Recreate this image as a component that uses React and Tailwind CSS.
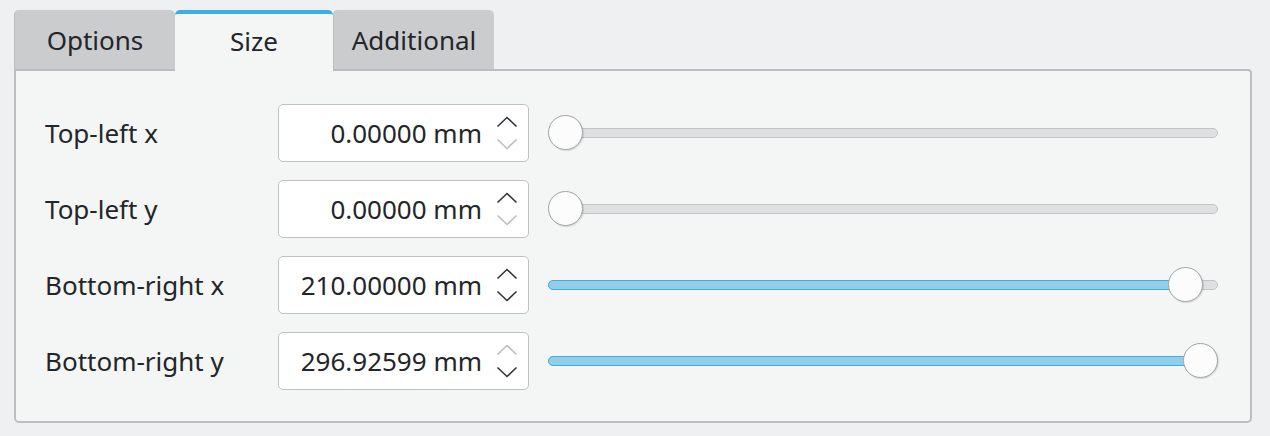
// Page-size dialog section: tab bar + "Size" tab with four spinbox/slider rows.
import { useState } from 'react'

const ROWS = [
  { label: 'Top-left x',     value: '0.00000 mm',   pos: 0,      upOn: true,  downOn: false },
  { label: 'Top-left y',     value: '0.00000 mm',   pos: 0,      upOn: true,  downOn: false },
  { label: 'Bottom-right x', value: '210.00000 mm', pos: 0.9756, upOn: true,  downOn: true  },
  { label: 'Bottom-right y', value: '296.92599 mm', pos: 1,      upOn: false, downOn: true  },
]

const TABS = ['Options', 'Size', 'Additional']

function Chevron({ up, enabled }) {
  return (
    <svg width="22" height="12" viewBox="0 0 22 12" fill="none"
         className={enabled ? 'text-[#31363b]' : 'text-[#bdbebf]'}>
      <path d={up ? 'M1.5 10.5 L11 1.5 L20.5 10.5' : 'M1.5 1.5 L11 10.5 L20.5 1.5'}
            stroke="currentColor" strokeWidth="1.6" />
    </svg>
  )
}

function SpinBox({ value, upOn, downOn }) {
  return (
    <div className="w-[251px] h-[58px] flex items-center bg-white border border-[#bfc0c1]
                    rounded-[5px] pr-[10px]">
      <span className="flex-1 text-right text-[26px] text-[#232629] pr-[14px]">{value}</span>
      <div className="flex flex-col gap-[10px]">
        <Chevron up enabled={upOn} />
        <Chevron enabled={downOn} />
      </div>
    </div>
  )
}

function Slider({ pos }) {
  // handle travels between the two ends of the track (handle is 35px wide)
  const left = `calc(${pos * 100}% - ${pos * 35}px)`
  const fill = `calc(${pos * 100}% - ${pos * 35}px + 17px)`
  return (
    <div className="relative flex-1 h-[36px] flex items-center">
      <div className="w-full h-[10px] rounded-full bg-[#dfe0e1] border border-[#c3c4c5]" />
      {pos > 0 && (
        <div className="absolute left-0 h-[10px] rounded-full bg-[#93cee9] border border-[#3daee9]"
             style={{ width: fill }} />
      )}
      <div className="absolute top-0 w-[35px] h-[35px] rounded-full bg-[#fcfcfc]
                      border-[1.5px] border-[#a2a3a4] shadow-[1px_1px_1px_rgba(0,0,0,0.12)]"
           style={{ left }} />
    </div>
  )
}

export default function App() {
  const [tab, setTab] = useState('Size')

  return (
    <div className="w-[1270px] h-[436px] bg-[#eff0f1] pt-[10px] pl-[14px] pr-[18px]
                    text-[#232629] font-['Noto_Sans',sans-serif]">

      {/* Tab bar */}
      <div className="flex h-[61px] relative z-10">
        {TABS.map(t => {
          const active = t === tab
          return (
            <button key={t} onClick={() => setTab(t)}
                    className={active
                      ? 'w-[158px] h-[62px] bg-[#f4f5f5] border-t-4 border-[#3daee9] rounded-t-[5px] text-[26px] pb-[4px]'
                      : 'w-[161px] h-[61px] bg-[#cbcccd] border-b-2 border-l border-[#bcbdbe] rounded-t-[5px] text-[26px] pt-[2px]'}>
              {t}
            </button>
          )
        })}
      </div>

      {/* Panel */}
      <div className="-mt-[2px] h-[354px] bg-[#f4f5f5] border-2 border-[#bdbebf] rounded-b-[5px]
                      rounded-tr-[4px] pl-[29px] pr-[32px] pt-[33px] flex flex-col gap-[18px]">
        {ROWS.map(r => (
          <div key={r.label} className="flex items-center h-[58px]">
            <span className="w-[233px] text-[26px]">{r.label}</span>
            <SpinBox value={r.value} upOn={r.upOn} downOn={r.downOn} />
            <div className="w-[19px]" />
            <Slider pos={r.pos} />
          </div>
        ))}
      </div>
    </div>
  )
}
